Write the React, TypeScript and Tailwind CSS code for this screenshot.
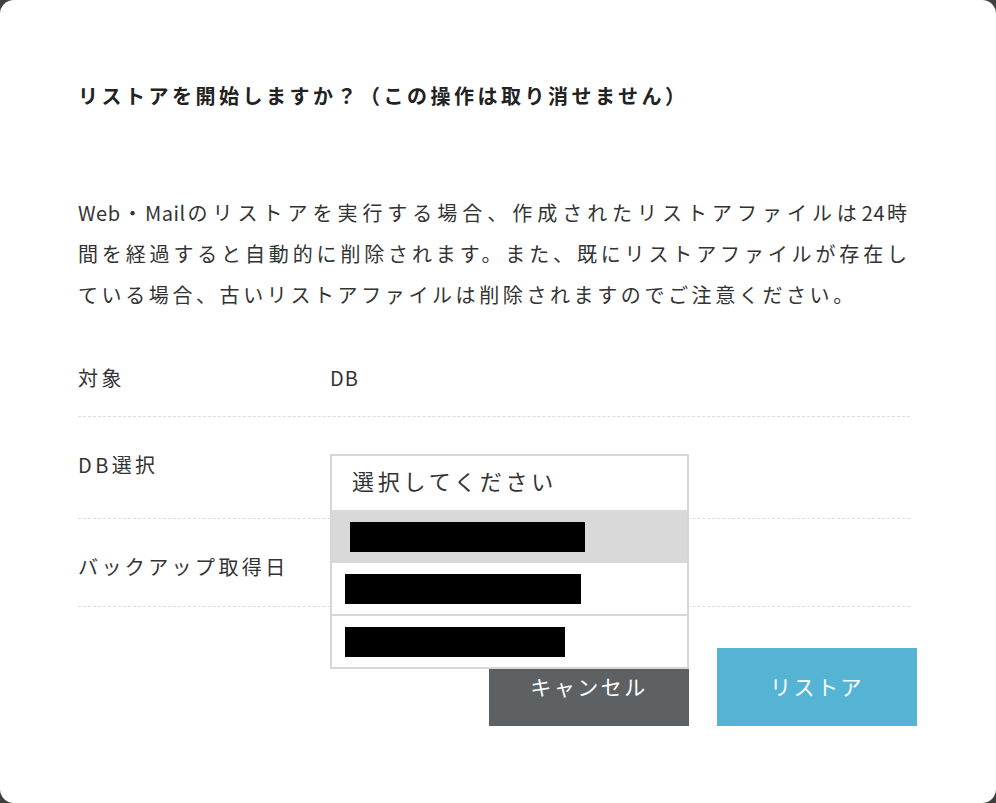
const jp = "font-['Noto_Sans_CJK_JP','Noto_Sans',sans-serif]";

function Row({ label, children, className }: { label: string; children?: React.ReactNode; className?: string }) {
  return (
    <div className={`flex border-b border-dashed border-[#dcdcdc] ${className ?? ""}`}>
      <div className="w-[252px] shrink-0 text-[20px] leading-[30px] tracking-[3.4px] text-[#333]">{label}</div>
      <div className="relative flex-1 text-[20px] leading-[30px] tracking-[1px] text-[#333]">{children}</div>
    </div>
  );
}

function Redacted({ w, ml }: { w: number; ml: number }) {
  return <div className="h-[30px] bg-black" style={{ width: w, marginLeft: ml }} />;
}

export default function App() {
  return (
    <div className={`h-[803px] w-[996px] bg-[#3f3f3f] ${jp}`}>
      <div className="h-full w-full rounded-[14px] bg-white pl-[78px] pr-[79px] pt-[81px]">
        <h1 className="whitespace-nowrap text-[20px] font-bold leading-[30px] tracking-[3.5px] text-[#222]">
          リストアを開始しますか？（この操作は取り消せません）
        </h1>

        {/* justified paragraph, line breaks fixed to the original */}
        <div className="mt-[81px] mr-[7px] text-[20px] leading-[41px] tracking-[3px] text-[#333]">
          <div className="whitespace-nowrap text-justify [text-align-last:justify]">
            <span className="tracking-[0.5px]">Web・Mail</span>のリストアを実行する場合、作成されたリストアファイルは
            <span className="tracking-[0.5px]">24</span>時
          </div>
          <div className="whitespace-nowrap text-justify [text-align-last:justify]">
            間を経過すると自動的に削除されます。また、既にリストアファイルが存在し
          </div>
          <div className="whitespace-nowrap tracking-[3.6px]">
            ている場合、古いリストアファイルは削除されますのでご注意ください。
          </div>
        </div>

        <div className="mt-[15px] mr-[7px]">
          <Row label="対象" className="pt-[33px] pb-[23px]">
            DB
          </Row>
          <Row label="DB選択" className="h-[102px] pt-[33px]">
            {/* open select menu */}
            <div className="absolute left-0 top-[4px] z-10 w-[359px] border-2 border-[#d6d6d6] bg-white">
              <div className="flex h-[54px] items-center pb-[6px] pl-[20px] text-[22px] tracking-[3.8px] text-[#333]">
                選択してください
              </div>
              <div className="flex h-[53px] items-center bg-[#d9d9d9]">
                <Redacted w={235} ml={18} />
              </div>
              <div className="flex h-[51px] items-center">
                <Redacted w={236} ml={13} />
              </div>
              <div className="flex h-[53px] items-center border-t-2 border-[#d6d6d6]">
                <Redacted w={220} ml={13} />
              </div>
            </div>
          </Row>
          <Row label="バックアップ取得日" className="pt-[33px] pb-[24px]" />
        </div>

        <div className="mt-[41px] flex justify-end gap-[28px]">
          <button className="flex h-[78px] w-[200px] items-center justify-center bg-[#5d6163] text-[21px] tracking-[2.5px] text-white">
            キャンセル
          </button>
          <button className="flex h-[78px] w-[200px] items-center justify-center bg-[#55b4d4] text-[21px] tracking-[2.5px] text-white">
            リストア
          </button>
        </div>
      </div>
    </div>
  );
}
